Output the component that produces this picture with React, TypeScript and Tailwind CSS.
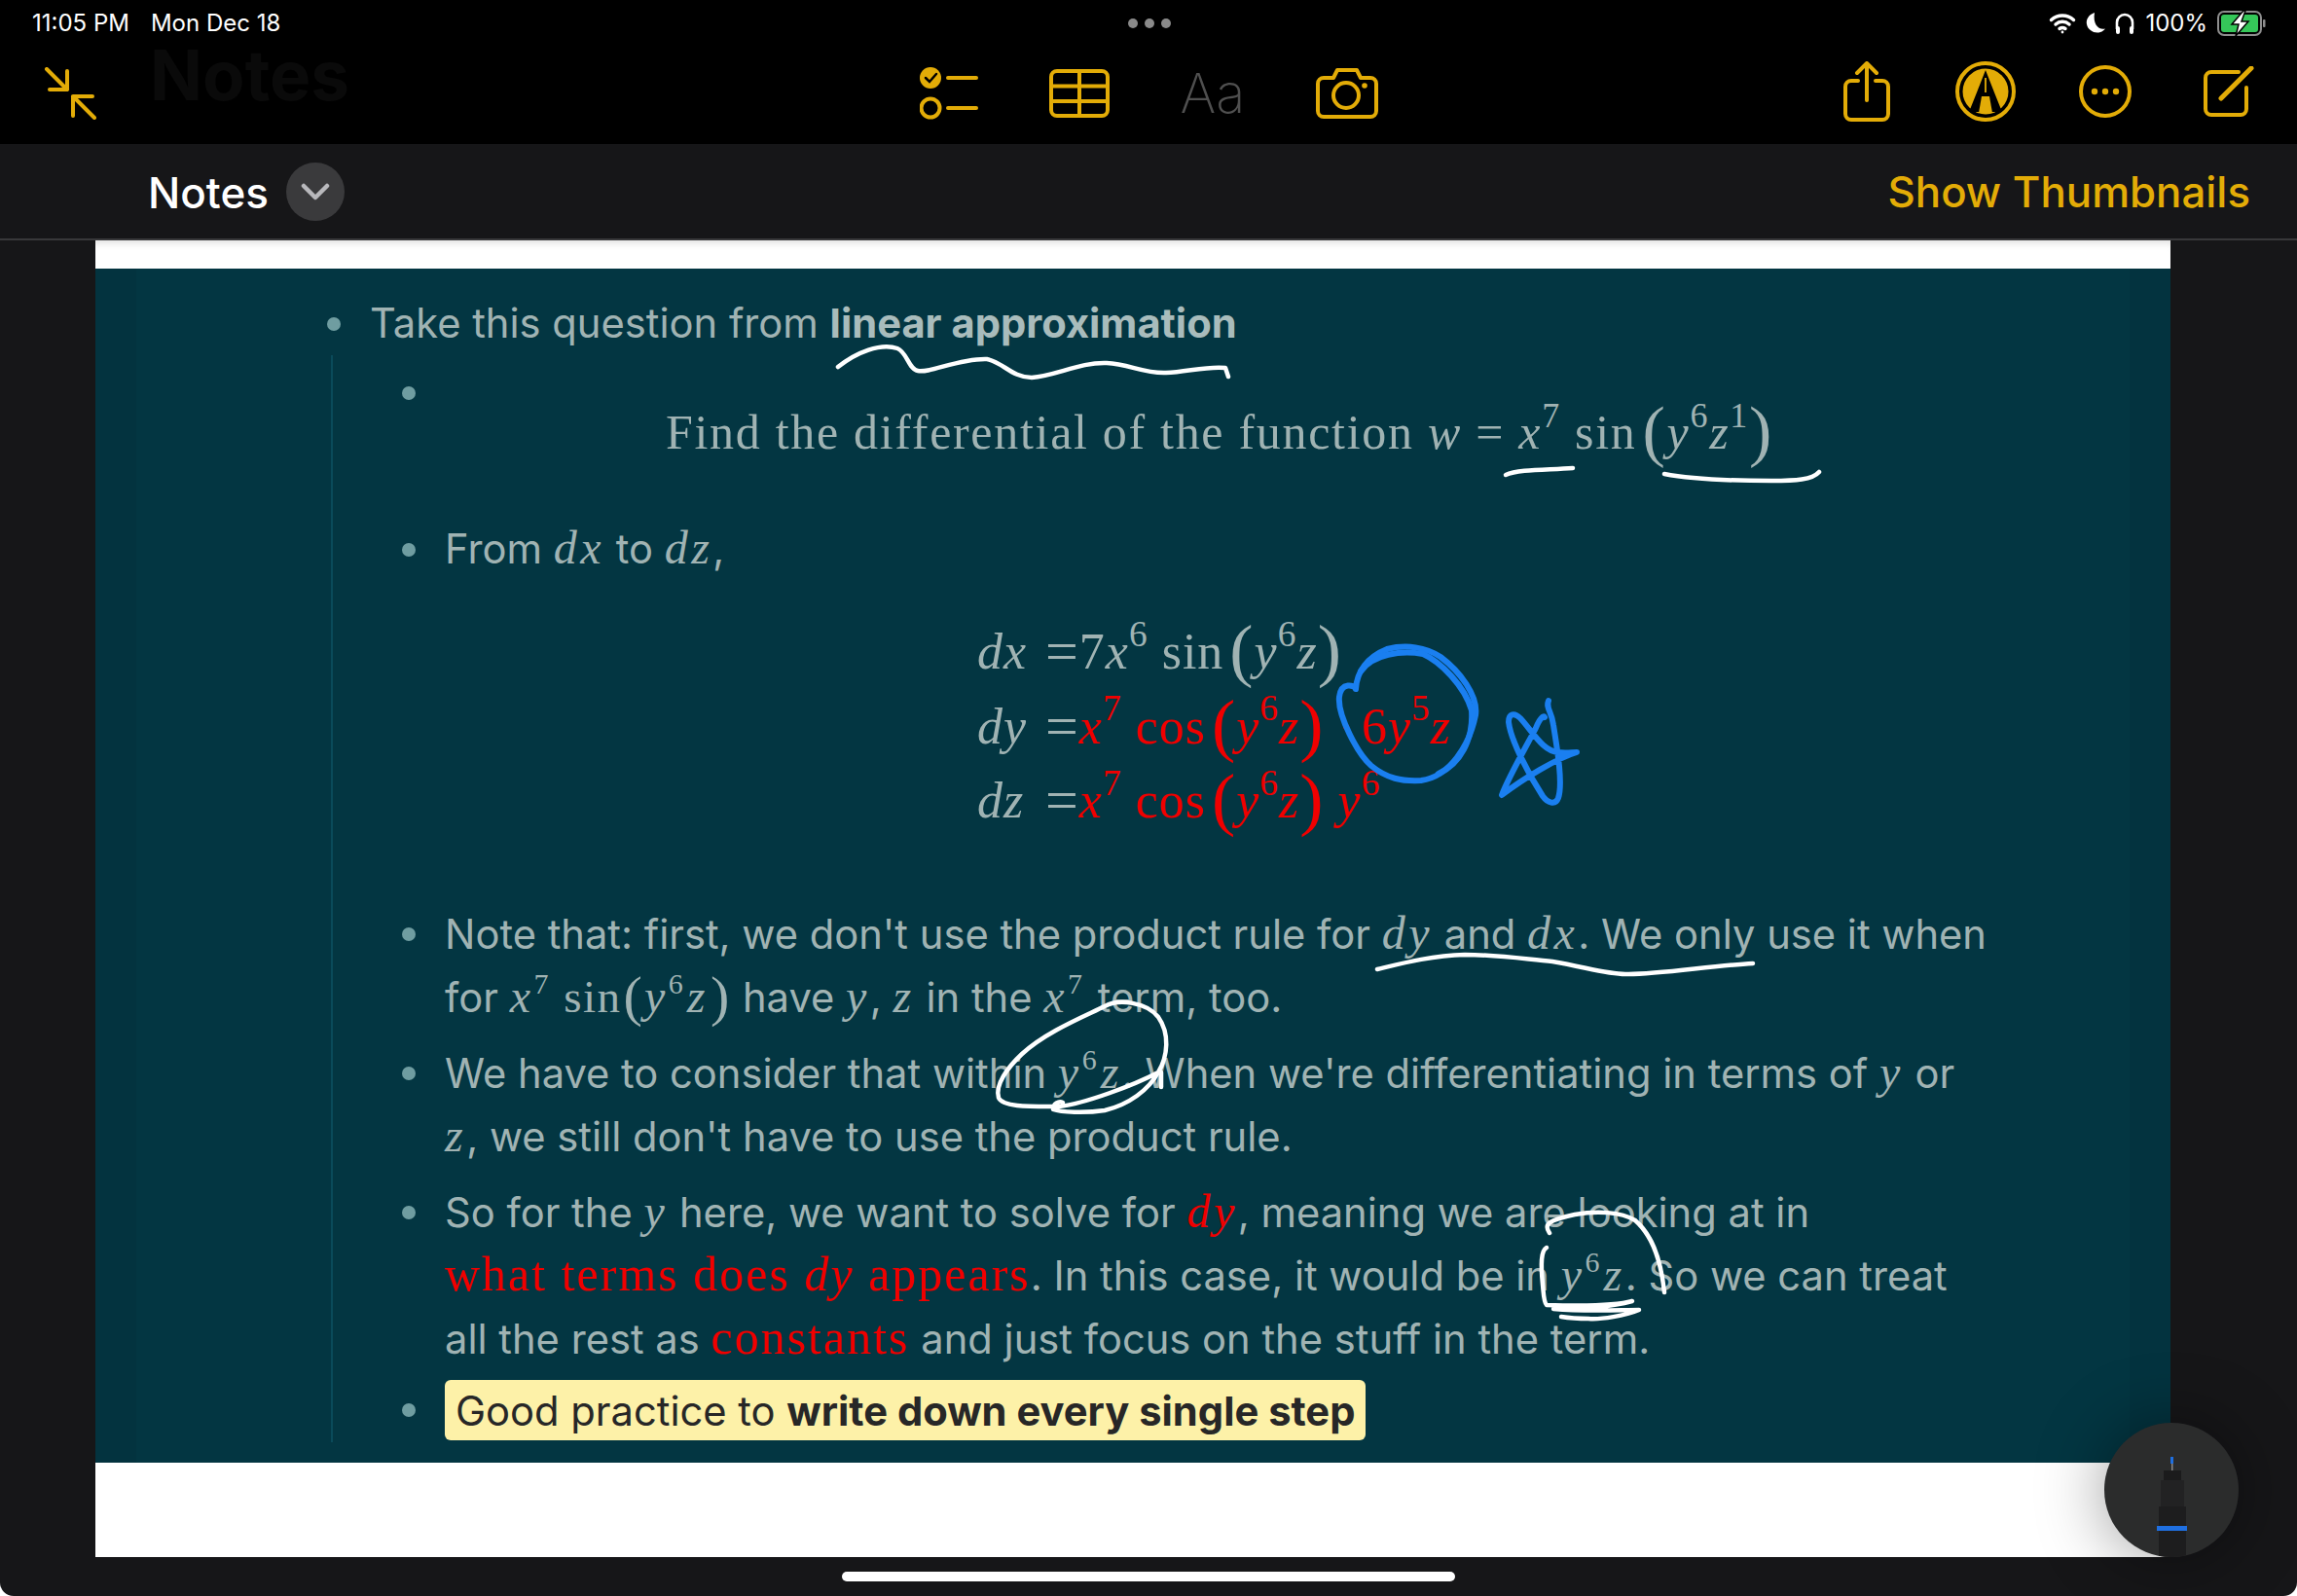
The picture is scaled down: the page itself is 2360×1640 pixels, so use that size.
import React from 'react';

const GOLD = '#e3ac07';

// inline math: serif italic, like the rendered KaTeX in the note
const M = ({ children, red }: { children: React.ReactNode; red?: boolean }) => (
  <span className={`font-['Liberation_Serif',serif] italic text-[48px] leading-[0] tracking-[3.500px] ${red ? 'text-[#f00000]' : ''}`}>{children}</span>
);
const R = ({ children }: { children: React.ReactNode }) => (
  <span className="font-['Liberation_Serif',serif] text-[47px] leading-[0] tracking-[1.500px] not-italic">{children}</span>
);
const Paren = ({ children }: { children: React.ReactNode }) => (
  <span className="font-['Liberation_Serif',serif] text-[58px] leading-[0] align-[-3px] mx-[2px]">{children}</span>
);
const Sup = ({ children, tight }: { children: React.ReactNode; tight?: boolean }) => (
  <sup className={`font-['Liberation_Serif',serif] text-[0.72em] not-italic -top-[0.62em] ${tight ? '' : 'mr-[4px]'}`}>{children}</sup>
);
// tall parenthesis of the display formulas
const P = ({ children, open }: { children: React.ReactNode; open?: boolean }) => (
  <span className={`text-[1.4em] leading-[0] align-[-0.07em] ${open ? 'ml-[6px]' : ''}`}>{children}</span>
);
const Red = ({ children }: { children: React.ReactNode }) => (
  <span className="font-['Liberation_Serif',serif] text-[50px] leading-[0] tracking-[2px] text-[#f00000]">{children}</span>
);
const Eq = () => <span className="text-[60px] leading-[0] align-[-2px]">=</span>;

const Item = ({ children, h }: { children?: React.ReactNode; h?: string }) => (
  <div className={`flex ${h ?? ''}`}>
    <div className="w-[44px] h-[65px] shrink-0 flex items-center">
      <div className="w-[14px] h-[14px] rounded-full bg-[#6f9da1]" />
    </div>
    <div className="flex-1 whitespace-nowrap">{children}</div>
  </div>
);

function StatusBar() {
  return (
    <div className="h-[47px] flex items-center justify-between pl-[33px] pr-[32px] text-white text-[24px] font-['Inter',sans-serif]">
      <div className="flex gap-[22px] w-[500px]">
        <span>11:05 PM</span>
        <span>Mon Dec 18</span>
      </div>
      <div className="flex gap-[7px]">
        <div className="w-[10px] h-[10px] rounded-full bg-[#8a8a8a]" />
        <div className="w-[10px] h-[10px] rounded-full bg-[#8a8a8a]" />
        <div className="w-[10px] h-[10px] rounded-full bg-[#8a8a8a]" />
      </div>
      <div className="flex items-center justify-end w-[500px] gap-[7px]">
        <svg width="28" height="24" viewBox="0 0 28 24" fill="none" stroke="white" strokeWidth="3.4" strokeLinecap="round" className="mr-[2px]">
          <path d="M2.5 8.5C9 2.5 19 2.5 25.5 8.5" />
          <path d="M7 13c4-3.6 10-3.6 14 0" />
          <path d="M11 17.5c1.8-1.3 4.2-1.3 6 0" />
          <circle cx="14" cy="21" r="1.4" fill="white" stroke="none" />
        </svg>
        <svg width="22" height="24" viewBox="0 0 22 24">
          <path d="M10 1C4 3 1 8 2 13c1 6 8 10 14 8 2-.6 4-2 5-3.500C14 19 8 13 10 1Z" fill="white" />
        </svg>
        <svg width="24" height="24" viewBox="0 0 24 24" fill="none" stroke="white" strokeWidth="2.600">
          <path d="M4 18V11a8 8 0 0 1 16 0v7" />
          <rect x="3" y="15" width="4" height="8" rx="2" fill="white" stroke="none" />
          <rect x="17" y="15" width="4" height="8" rx="2" fill="white" stroke="none" />
        </svg>
        <span className="ml-[2px]">100%</span>
        <svg width="50" height="26" viewBox="0 0 50 26" className="ml-[3px]">
          <rect x="1" y="1" width="44" height="24" rx="6" fill="none" stroke="#8e8e8e" strokeWidth="2" />
          <rect x="4" y="4" width="38" height="18" rx="3" fill="#35c759" />
          <rect x="47" y="9" width="2.500" height="8" rx="1" fill="#8e8e8e" />
          <path d="M27 0 15 14h7l-3 12 13-15h-7l4-11Z" fill="white" stroke="black" strokeWidth="1.500" />
        </svg>
      </div>
    </div>
  );
}

function Toolbar() {
  return (
    <div className="h-[101px] grid grid-cols-[1fr_auto_1fr] items-start relative">
      <div className="flex pl-[45px] pt-[22px]">
        <svg width="54" height="54" viewBox="0 0 54 54" fill="none" stroke={GOLD} strokeWidth="4" strokeLinecap="round" strokeLinejoin="round">
          <path d="M3 2l21 21M24 4v19H6" />
          <path d="M52 52 30 30M30 50V30h20" />
        </svg>
        <span className="ml-[55px] -mt-[20px] text-[71px] font-bold leading-[56px] text-[#0a0a0a] font-['Inter',sans-serif]">Notes</span>
      </div>
      <div className="flex items-center gap-[73px] pt-[20px]">
        <svg width="60" height="58" viewBox="0 0 60 58" fill="none" stroke={GOLD} strokeWidth="4" strokeLinecap="round">
          <circle cx="11" cy="13" r="11" fill={GOLD} stroke="none" />
          <path d="M6 13l4 4 7-8" stroke="black" strokeWidth="2.500" />
          <path d="M29 13h29" />
          <circle cx="11" cy="44" r="9.500" />
          <path d="M29 44h29" />
        </svg>
        <svg width="62" height="50" viewBox="0 0 62 50" fill="none" stroke={GOLD} strokeWidth="4">
          <rect x="2" y="2" width="58" height="46" rx="6" />
          <path d="M31 2v46M2 17.500h58M2 33h58" />
        </svg>
        <span className="text-[56px] leading-[56px] font-extralight text-[#4f4f4f] font-['Inter',sans-serif] w-[66px]">Aa</span>
        <svg width="64" height="52" viewBox="0 0 64 52" fill="none" stroke={GOLD} strokeWidth="4" strokeLinejoin="round">
          <path d="M8 10h10l4-8h20l4 8h10a6 6 0 0 1 6 6v28a6 6 0 0 1-6 6H8a6 6 0 0 1-6-6V16a6 6 0 0 1 6-6Z" />
          <circle cx="31" cy="28" r="13" />
          <circle cx="50" cy="18" r="2.800" fill={GOLD} stroke="none" />
        </svg>
      </div>
      <div className="flex justify-end items-center pr-[44px] pt-[16px]">
        <svg width="48" height="62" viewBox="0 0 48 62" fill="none" stroke={GOLD} strokeWidth="4" strokeLinecap="round" strokeLinejoin="round">
          <path d="M15 20H8a6 6 0 0 0-6 6v28a6 6 0 0 0 6 6h32a6 6 0 0 0 6-6V26a6 6 0 0 0-6-6h-7" />
          <path d="M24 40V3M14 12l10-10 10 10" />
        </svg>
        <svg width="62" height="62" viewBox="0 0 62 62" className="ml-[67px]">
          <circle cx="31" cy="31" r="29" fill="none" stroke={GOLD} strokeWidth="4" />
          <circle cx="31" cy="31" r="23.500" fill={GOLD} />
          <path d="M31 9 40 32l8 20H14l8-20Z" fill="black" />
          <path d="M31 17v15" stroke={GOLD} strokeWidth="1.800" />
          <path d="M27 36h8l3 17H24Z" fill={GOLD} />
        </svg>
        <svg width="54" height="54" viewBox="0 0 54 54" className="ml-[65px]" fill="none" stroke={GOLD} strokeWidth="4">
          <circle cx="27" cy="27" r="25" />
          <circle cx="16" cy="27" r="3.200" fill={GOLD} stroke="none" />
          <circle cx="27" cy="27" r="3.200" fill={GOLD} stroke="none" />
          <circle cx="38" cy="27" r="3.200" fill={GOLD} stroke="none" />
        </svg>
        <svg width="52" height="52" viewBox="0 0 52 52" className="ml-[74px]" fill="none" stroke={GOLD} strokeWidth="4" strokeLinecap="round" strokeLinejoin="round">
          <path d="M36 6H8a6 6 0 0 0-6 6v32a6 6 0 0 0 6 6h30a6 6 0 0 0 6-6V22" />
          <path d="M18 33 49 2" strokeWidth="5" />
        </svg>
      </div>
    </div>
  );
}

function NavBar() {
  return (
    <div className="h-[99px] bg-[#161618] border-b-2 border-[#38383a] flex items-center justify-between pl-[152px] pr-[48px] font-['Inter',sans-serif]">
      <div className="flex items-center gap-[18px]">
        <span className="text-[44px] font-medium text-white pt-[2px]">Notes</span>
        <div className="w-[60px] h-[60px] rounded-full bg-[#3a3a3c] flex items-center justify-center">
          <svg width="30" height="20" viewBox="0 0 30 20" fill="none" stroke="#b8b8bc" strokeWidth="4.500" strokeLinecap="round" strokeLinejoin="round">
            <path d="M3 4l12 12L27 4" />
          </svg>
        </div>
      </div>
      <span className="text-[43.800px] font-medium text-[#e3ac07] pt-[2px]">Show Thumbnails</span>
    </div>
  );
}

function NoteBody() {
  return (
    <div className="h-[1227px] bg-[#03333f] px-[42px]">
      <div className="h-full bg-[#033642] pt-[24px] pl-[196px] text-[41.700px] leading-[65px] text-[#a0b3b3] font-['Inter',sans-serif]">
        <Item>
          Take this question from <b className="font-bold text-[#a9bcbc]">linear approximation</b>
        </Item>
        <div className="ml-[4px] border-l-2 border-[#0a4a5a] pl-[71px] pt-[6px] h-[1117px]">
          <Item h="h-[161px]">
            <div className="w-[1592px] pt-[48px] text-center font-['Liberation_Serif',serif] text-[50px] leading-[50px] tracking-[1.700px]">
              Find the differential of the function <i>w</i> = <i>x</i>
              <Sup tight>7</Sup> sin
              <P open>(</P>
              <i>y</i>
              <Sup tight>6</Sup>
              <i>z</i>
              <Sup tight>1</Sup>
              <P>)</P>
            </div>
          </Item>
          <Item>
            From <M>dx</M> to <M>dz</M>,
          </Item>
          <div className="ml-[591px] mt-[35px] mb-[66px] font-['Liberation_Serif',serif] text-[52px] leading-[76.500px] tracking-[1px] grid grid-cols-[70px_auto] justify-start">
            <i>dx</i>
            <div>
              <Eq />7<i>x</i>
              <Sup tight>6</Sup> sin
              <P open>(</P>
              <i>y</i>
              <Sup tight>6</Sup>
              <i>z</i>
              <P>)</P>
            </div>
            <i>dy</i>
            <div>
              <Eq />
              <span className="text-[#f00000]">
                <i>x</i>
                <Sup tight>7</Sup> cos
                <P open>(</P>
                <i>y</i>
                <Sup tight>6</Sup>
                <i>z</i>
                <P>)</P> <span className="mr-[6px]">·</span>6<i>y</i>
                <Sup tight>5</Sup>
                <i>z</i>
              </span>
            </div>
            <i>dz</i>
            <div>
              <Eq />
              <span className="text-[#f00000]">
                <i>x</i>
                <Sup tight>7</Sup> cos
                <P open>(</P>
                <i>y</i>
                <Sup tight>6</Sup>
                <i>z</i>
                <P>)</P> <i>y</i>
                <Sup tight>6</Sup>
              </span>
            </div>
          </div>
          <Item>
            Note that: first, we don't use the product rule for <M>dy</M> and <M>dx</M>. We only use it when
            <br />
            for <M>x</M>
            <Sup>7</Sup> <R>sin</R>
            <Paren>(</Paren>
            <M>y</M>
            <Sup>6</Sup>
            <M>z</M>
            <Paren>)</Paren> have <M>y</M>, <M>z</M> in the <M>x</M>
            <Sup>7</Sup> term, too.
          </Item>
          <Item h="mt-[13px]">
            We have to consider that within <M>y</M>
            <Sup>6</Sup>
            <M>z</M>. When we're differentiating in terms of <M>y</M> or
            <br />
            <M>z</M>, we still don't have to use the product rule.
          </Item>
          <Item h="mt-[13px]">
            So for the <M>y</M> here, we want to solve for <M red>dy</M>, meaning we are looking at in
            <br />
            <Red>
              what terms does <i>dy</i> appears
            </Red>
            . In this case, it would be in <M>y</M>
            <Sup>6</Sup>
            <M>z</M>. So we can treat
            <br />
            all the rest as <Red>constants</Red> and just focus on the stuff in the term.
          </Item>
          <Item h="mt-[8px]">
            <span className="inline-block h-[62px] leading-[64px] mt-[1px] px-[11px] bg-[#fdf1a8] rounded-[6px] text-[#272727]">
              Good practice to <b className="font-bold">write down every single step</b>
            </span>
          </Item>
        </div>
      </div>
    </div>
  );
}

// handwriting drawn over the note with the pencil
function Ink() {
  return (
    <svg width="2360" height="1640" viewBox="0 0 2360 1640" fill="none" strokeLinecap="round" strokeLinejoin="round" className="absolute inset-0 pointer-events-none">
      <g stroke="white" strokeWidth="4.500">
        <path d="M861 377C880 362 905 352 922 358C932 362 934 380 943 381C955 384 985 368 1014 369C1030 372 1040 388 1060 388C1085 386 1110 372 1137 373C1160 374 1175 384 1198 383C1220 382 1240 376 1259 378L1262 387" />
        <path d="M1547 488C1560 482 1590 483 1616 481" />
        <path d="M1710 487C1740 493 1780 494 1820 494C1845 494 1862 493 1869 485" />
        <path d="M1415 996C1440 990 1470 982 1505 981C1540 981 1570 986 1595 988C1630 994 1650 1001 1670 1001C1700 1002 1760 992 1801 990" />
        <path d="M1190 1102C1200 1085 1202 1062 1190 1045C1178 1030 1150 1026 1135 1034C1115 1044 1075 1060 1050 1083C1035 1097 1022 1115 1026 1128C1030 1138 1060 1137 1088 1137C1115 1134 1165 1115 1190 1102C1180 1120 1160 1135 1135 1141C1115 1144 1090 1143 1082 1140C1082 1134 1088 1131 1092 1133" />
        <path d="M1193 1102V1117" />
        <path d="M1592 1267C1586 1258 1590 1254 1618 1248C1640 1244 1665 1245 1680 1254C1696 1268 1706 1290 1710 1328" />
        <path d="M1589 1282C1583 1285 1583 1300 1585 1320C1586 1330 1586 1338 1589 1341C1620 1342 1660 1342 1677 1337C1650 1344 1615 1345 1596 1345C1630 1348 1665 1346 1684 1346C1670 1352 1645 1356 1632 1355C1620 1355 1610 1354 1604 1353" />
      </g>
      <g stroke="#1a7ff0" strokeWidth="6">
        <path d="M1393 708C1392 704 1378 700 1376 716C1374 735 1395 775 1409 787C1425 800 1440 803 1460 802C1490 798 1510 765 1516 735C1519 715 1500 690 1480 675C1465 665 1445 662 1425 667C1405 675 1394 690 1393 708" />
        <path d="M1398 690C1410 672 1440 668 1462 672C1480 680 1505 705 1512 730C1514 760 1500 785 1478 795" />
        <path d="M1591 720C1588 728 1594 730 1596 745C1600 770 1606 805 1601 820C1598 828 1590 825 1585 818C1570 795 1552 760 1550 742C1550 733 1556 732 1562 738C1575 752 1585 772 1601 773C1608 774 1615 773 1620 773C1600 779 1565 800 1543 817C1550 798 1572 760 1578 748C1582 738 1586 735 1587 737" />
      </g>
    </svg>
  );
}

function PenButton() {
  return (
    <div className="absolute left-[2162px] top-[1462px] w-[138px] h-[138px] rounded-full bg-[#2b2c2c] shadow-[0_0_70px_rgba(0,0,0,0.4)] overflow-hidden">
      <svg width="138" height="138" viewBox="0 0 138 138">
        <rect x="68" y="35" width="3" height="7" fill="#1f6fe0" />
        <rect x="69" y="42" width="1.500" height="11" fill="#8a8a8a" />
        <rect x="61" y="49" width="18" height="11" fill="#1b1b1c" />
        <rect x="58" y="59" width="24" height="28" fill="#222223" />
        <rect x="56" y="86" width="28" height="52" fill="#1d1d1e" />
        <rect x="54" y="106" width="31" height="5" fill="#1f6fe0" />
      </svg>
    </div>
  );
}

export default function App() {
  return (
    <div className="relative w-[2360px] h-[1640px] bg-white overflow-hidden">
      <div className="w-full h-full bg-[#161618] rounded-b-[14px] flex flex-col">
        <div className="bg-black">
          <StatusBar />
          <Toolbar />
        </div>
        <NavBar />
        <div className="flex pl-[98px]">
          <div className="w-[2132px] bg-white">
            <div className="h-[29px] shadow-[inset_0_8px_8px_-6px_rgba(0,0,0,0.15)]" />
            <NoteBody />
            <div className="h-[97px] bg-white" />
          </div>
        </div>
        <div className="flex-1 flex items-center justify-center">
          <div className="w-[630px] h-[10px] rounded-full bg-white" />
        </div>
      </div>
      <Ink />
      <PenButton />
    </div>
  );
}
